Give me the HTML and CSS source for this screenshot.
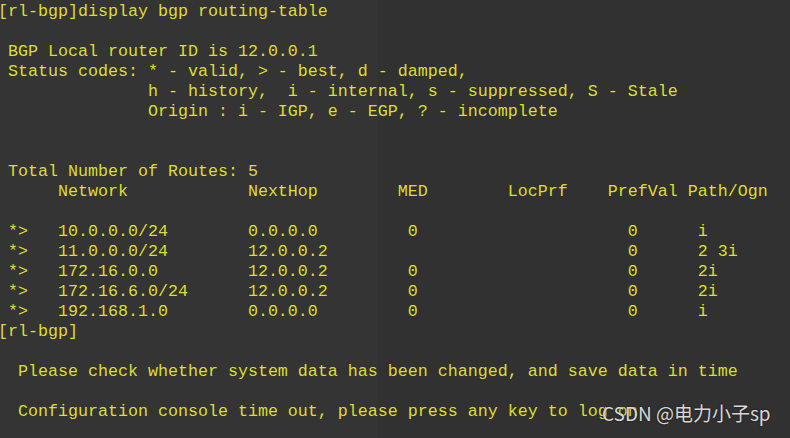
FILE: index.html
```html
<!DOCTYPE html>
<html>
<head>
<meta charset="utf-8">
<link rel="stylesheet" href="styles.css">
</head>
<body>
<div class="term">
<pre class="out">[rl-bgp]display bgp routing-table

 BGP Local router ID is 12.0.0.1
 Status codes: * - valid, &gt; - best, d - damped,
               h - history,  i - internal, s - suppressed, S - Stale
               Origin : i - IGP, e - EGP, ? - incomplete


 Total Number of Routes: 5
      Network            NextHop        MED        LocPrf    PrefVal Path/Ogn

 *&gt;   10.0.0.0/24        0.0.0.0         0                     0      i
 *&gt;   11.0.0.0/24        12.0.0.2                              0      2 3i
 *&gt;   172.16.0.0         12.0.0.2        0                     0      2i
 *&gt;   172.16.6.0/24      12.0.0.2        0                     0      2i
 *&gt;   192.168.1.0        0.0.0.0         0                     0      i
[rl-bgp]

  Please check whether system data has been changed, and save data in time

  Configuration console time out, please press any key to log on
</pre>
<div class="mark">CSDN @电力小子sp</div>
</div>
</body>
</html>
```
FILE: styles.css
```css
html, body {
  margin: 0;
  padding: 0;
  background: #323232;
  overflow: hidden;
}
.term {
  position: relative;
  width: 790px;
  height: 438px;
  background: linear-gradient(to right, #343434 0, #343434 378px, #313131 378px);
}
.out {
  margin: 0 0 0 -2px;
  padding-top: 2px;
  font-family: "Liberation Mono", "Courier New", monospace;
  font-size: 16.67px;
  line-height: 20px;
  color: #dede2e;
  white-space: pre;
}
.mark {
  position: absolute;
  left: 602px;
  top: 401px;
  font-family: "Noto Sans CJK SC", "Noto Sans", sans-serif;
  font-size: 19px;
  line-height: 24px;
  color: #d8d8d8;
  text-shadow: 0 0 2px rgba(0,0,0,0.6);
}
```
